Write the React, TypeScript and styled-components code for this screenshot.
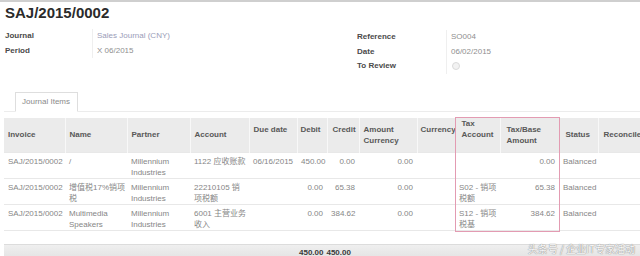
import React from 'react';
import styled, { createGlobalStyle } from 'styled-components';

const GlobalStyle = createGlobalStyle`
  html, body {
    margin: 0;
    padding: 0;
    background: #fff;
  }
  body {
    font-family: "Liberation Sans", Arial, "Noto Sans CJK SC", sans-serif;
    font-size: 8px;
    color: #777;
  }
`;

const Page = styled.div`
  position: relative;
  width: 640px;
  height: 256px;
  overflow: hidden;
`;

const TopRule = styled.div`
  height: 2px;
  background: #cfcfcf;
`;

const Title = styled.h1`
  margin: 2px 0 0 5px;
  font-size: 15px;
  line-height: 18px;
  font-weight: bold;
  color: #2b2b2b;
`;

const InfoSection = styled.div`
  display: flex;
  margin-top: 7px;
  padding-left: 5px;
`;

const InfoGroup = styled.div<{ $width?: number; $offset?: number }>`
  display: flex;
  flex-direction: column;
  margin-top: ${p => p.$offset || 0}px;
  width: ${p => (p.$width ? `${p.$width}px` : 'auto')};
`;

const InfoRow = styled.div`
  display: flex;
  height: 14.5px;
  line-height: 14.5px;
`;

const InfoLabel = styled.div<{ $width: number }>`
  width: ${p => p.$width}px;
  font-weight: bold;
  color: #4a4a4a;
`;

const InfoValue = styled.div<{ $link?: boolean }>`
  border-left: 1px solid #efefef;
  padding-left: 4px;
  color: ${p => (p.$link ? '#9a9cb8' : '#8f8f8f')};
`;

const Checkbox = styled.span`
  display: inline-block;
  width: 6px;
  height: 6px;
  border-radius: 50%;
  border: 1px solid #dadada;
  background: #f2f2f2;
  vertical-align: middle;
  margin-left: 1px;
`;

const TabBar = styled.div`
  display: flex;
  margin: 18.5px 0 0 4px;
  padding-left: 11px;
  border-bottom: 1px solid #ececec;
`;

const Tab = styled.div`
  height: 18px;
  line-height: 18px;
  padding: 0 7px 0 6px;
  border: 1px solid #dedede;
  border-bottom: 1px solid #fff;
  margin-bottom: -1px;
  background: #fff;
  color: #8a8a8a;
`;

const Table = styled.table`
  margin: 6px 0 0 4px;
  width: 646px;
  border-collapse: collapse;
  table-layout: fixed;
`;

const Col = styled.col<{ $w: number }>`
  width: ${p => p.$w}px;
`;

const HeadRow = styled.tr`
  height: 34px;
`;

const HeadCell = styled.th<{ $raise?: boolean; $pad: number }>`
  padding: 0 2px ${p => (p.$raise ? 11 : 0)}px ${p => p.$pad}px;
  background: #ebebeb;
  border-left: 1px solid #f8f8f8;
  font-weight: bold;
  color: #585858;
  text-align: left;
  vertical-align: middle;
  line-height: 11px;
  white-space: nowrap;
  &:first-child {
    border-left: none;
  }
`;

const BodyRow = styled.tr`
  height: 25px;
  &:last-child td {
    border-bottom: 1px solid #e8e8e8;
  }
`;

const Cell = styled.td<{ $num?: boolean }>`
  padding: 3px 4px 0 4px;
  border-top: 1px solid #e8e8e8;
  vertical-align: top;
  text-align: ${p => (p.$num ? 'right' : 'left')};
  line-height: 11px;
  white-space: nowrap;
  color: #868686;
`;

const Footer = styled.div`
  display: flex;
  gap: 3px;
  margin: 13px 0 0 4px;
  padding-left: 295px;
  height: 16px;
  line-height: 16px;
  background: linear-gradient(#efefef, #e1e1e1);
  border-top: 1px solid #dcdcdc;
  font-weight: bold;
  color: #3a3a3a;
`;

const Highlight = styled.div`
  position: absolute;
  left: 455px;
  top: 117px;
  width: 103px;
  height: 113px;
  border: 1px solid #e39bb2;
  pointer-events: none;
`;

const Watermark = styled.div`
  position: absolute;
  right: 5px;
  bottom: 1px;
  font-family: "Noto Sans CJK SC", sans-serif;
  font-size: 10px;
  line-height: 12px;
  color: #fafafa;
  text-shadow: 0 0 1px #8a8a8a, 0 0 1px #8a8a8a;
`;

type Value = string | string[];

interface Column {
  key: string;
  label: Value;
  w: number;
  raise?: boolean;
  num?: boolean;
  hp?: number;
}

const columns: Column[] = [
  { key: 'invoice', label: 'Invoice', w: 61 },
  { key: 'name', label: 'Name', w: 62 },
  { key: 'partner', label: 'Partner', w: 63 },
  { key: 'account', label: 'Account', w: 59 },
  { key: 'due', label: 'Due date', w: 48, raise: true },
  { key: 'debit', label: 'Debit', w: 30, raise: true, num: true, hp: 3 },
  { key: 'credit', label: 'Credit', w: 32, raise: true, num: true, hp: 5 },
  { key: 'amount', label: ['Amount', 'Currency'], w: 58, num: true },
  { key: 'currency', label: 'Currency', w: 38, raise: true, hp: 3 },
  { key: 'taxAccount', label: ['Tax', 'Account'], w: 45, raise: true, hp: 6 },
  { key: 'taxBase', label: ['Tax/Base', 'Amount'], w: 59, num: true, hp: 6 },
  { key: 'status', label: 'Status', w: 39, hp: 6 },
  { key: 'reconcile', label: 'Reconcile', w: 52, hp: 5 },
];

const rows: Record<string, Value>[] = [
  {
    invoice: 'SAJ/2015/0002',
    name: '/',
    partner: ['Millennium', 'Industries'],
    account: '1122 应收账款',
    due: '06/16/2015',
    debit: '450.00',
    credit: '0.00',
    amount: '0.00',
    currency: '',
    taxAccount: '',
    taxBase: '0.00',
    status: 'Balanced',
    reconcile: '',
  },
  {
    invoice: 'SAJ/2015/0002',
    name: ['增值税17%销项', '税'],
    partner: ['Millennium', 'Industries'],
    account: ['22210105 销', '项税额'],
    due: '',
    debit: '0.00',
    credit: '65.38',
    amount: '0.00',
    currency: '',
    taxAccount: ['S02 - 销项', '税额'],
    taxBase: '65.38',
    status: 'Balanced',
    reconcile: '',
  },
  {
    invoice: 'SAJ/2015/0002',
    name: ['Multimedia', 'Speakers'],
    partner: ['Millennium', 'Industries'],
    account: ['6001 主营业务', '收入'],
    due: '',
    debit: '0.00',
    credit: '384.62',
    amount: '0.00',
    currency: '',
    taxAccount: ['S12 - 销项', '税基'],
    taxBase: '384.62',
    status: 'Balanced',
    reconcile: '',
  },
];

function Lines({ value }: { value: Value }) {
  if (!Array.isArray(value)) return <>{value}</>;
  return (
    <>
      {value.map((line, i) => (
        <div key={i}>{line}</div>
      ))}
    </>
  );
}

export default function App() {
  return (
    <Page>
      <GlobalStyle />
      <TopRule />
      <Title>SAJ/2015/0002</Title>

      <InfoSection>
        <InfoGroup $width={352}>
          <InfoRow>
            <InfoLabel $width={87}>Journal</InfoLabel>
            <InfoValue $link>Sales Journal (CNY)</InfoValue>
          </InfoRow>
          <InfoRow>
            <InfoLabel $width={87}>Period</InfoLabel>
            <InfoValue>X 06/2015</InfoValue>
          </InfoRow>
        </InfoGroup>
        <InfoGroup $offset={1}>
          <InfoRow>
            <InfoLabel $width={89}>Reference</InfoLabel>
            <InfoValue>SO004</InfoValue>
          </InfoRow>
          <InfoRow>
            <InfoLabel $width={89}>Date</InfoLabel>
            <InfoValue>06/02/2015</InfoValue>
          </InfoRow>
          <InfoRow>
            <InfoLabel $width={89}>To Review</InfoLabel>
            <InfoValue>
              <Checkbox />
            </InfoValue>
          </InfoRow>
        </InfoGroup>
      </InfoSection>

      <TabBar>
        <Tab>Journal Items</Tab>
      </TabBar>

      <Table>
        <colgroup>
          {columns.map(c => (
            <Col key={c.key} $w={c.w} />
          ))}
        </colgroup>
        <thead>
          <HeadRow>
            {columns.map(c => (
              <HeadCell key={c.key} $raise={c.raise} $pad={c.hp ?? 4}>
                <Lines value={c.label} />
              </HeadCell>
            ))}
          </HeadRow>
        </thead>
        <tbody>
          {rows.map((r, i) => (
            <BodyRow key={i}>
              {columns.map(c => (
                <Cell key={c.key} $num={c.num}>
                  <Lines value={r[c.key]} />
                </Cell>
              ))}
            </BodyRow>
          ))}
        </tbody>
      </Table>

      <Footer>
        <span>450.00</span>
        <span>450.00</span>
      </Footer>

      <Highlight />
      <Watermark>头条号 / 企业IT专家活动</Watermark>
    </Page>
  );
}
